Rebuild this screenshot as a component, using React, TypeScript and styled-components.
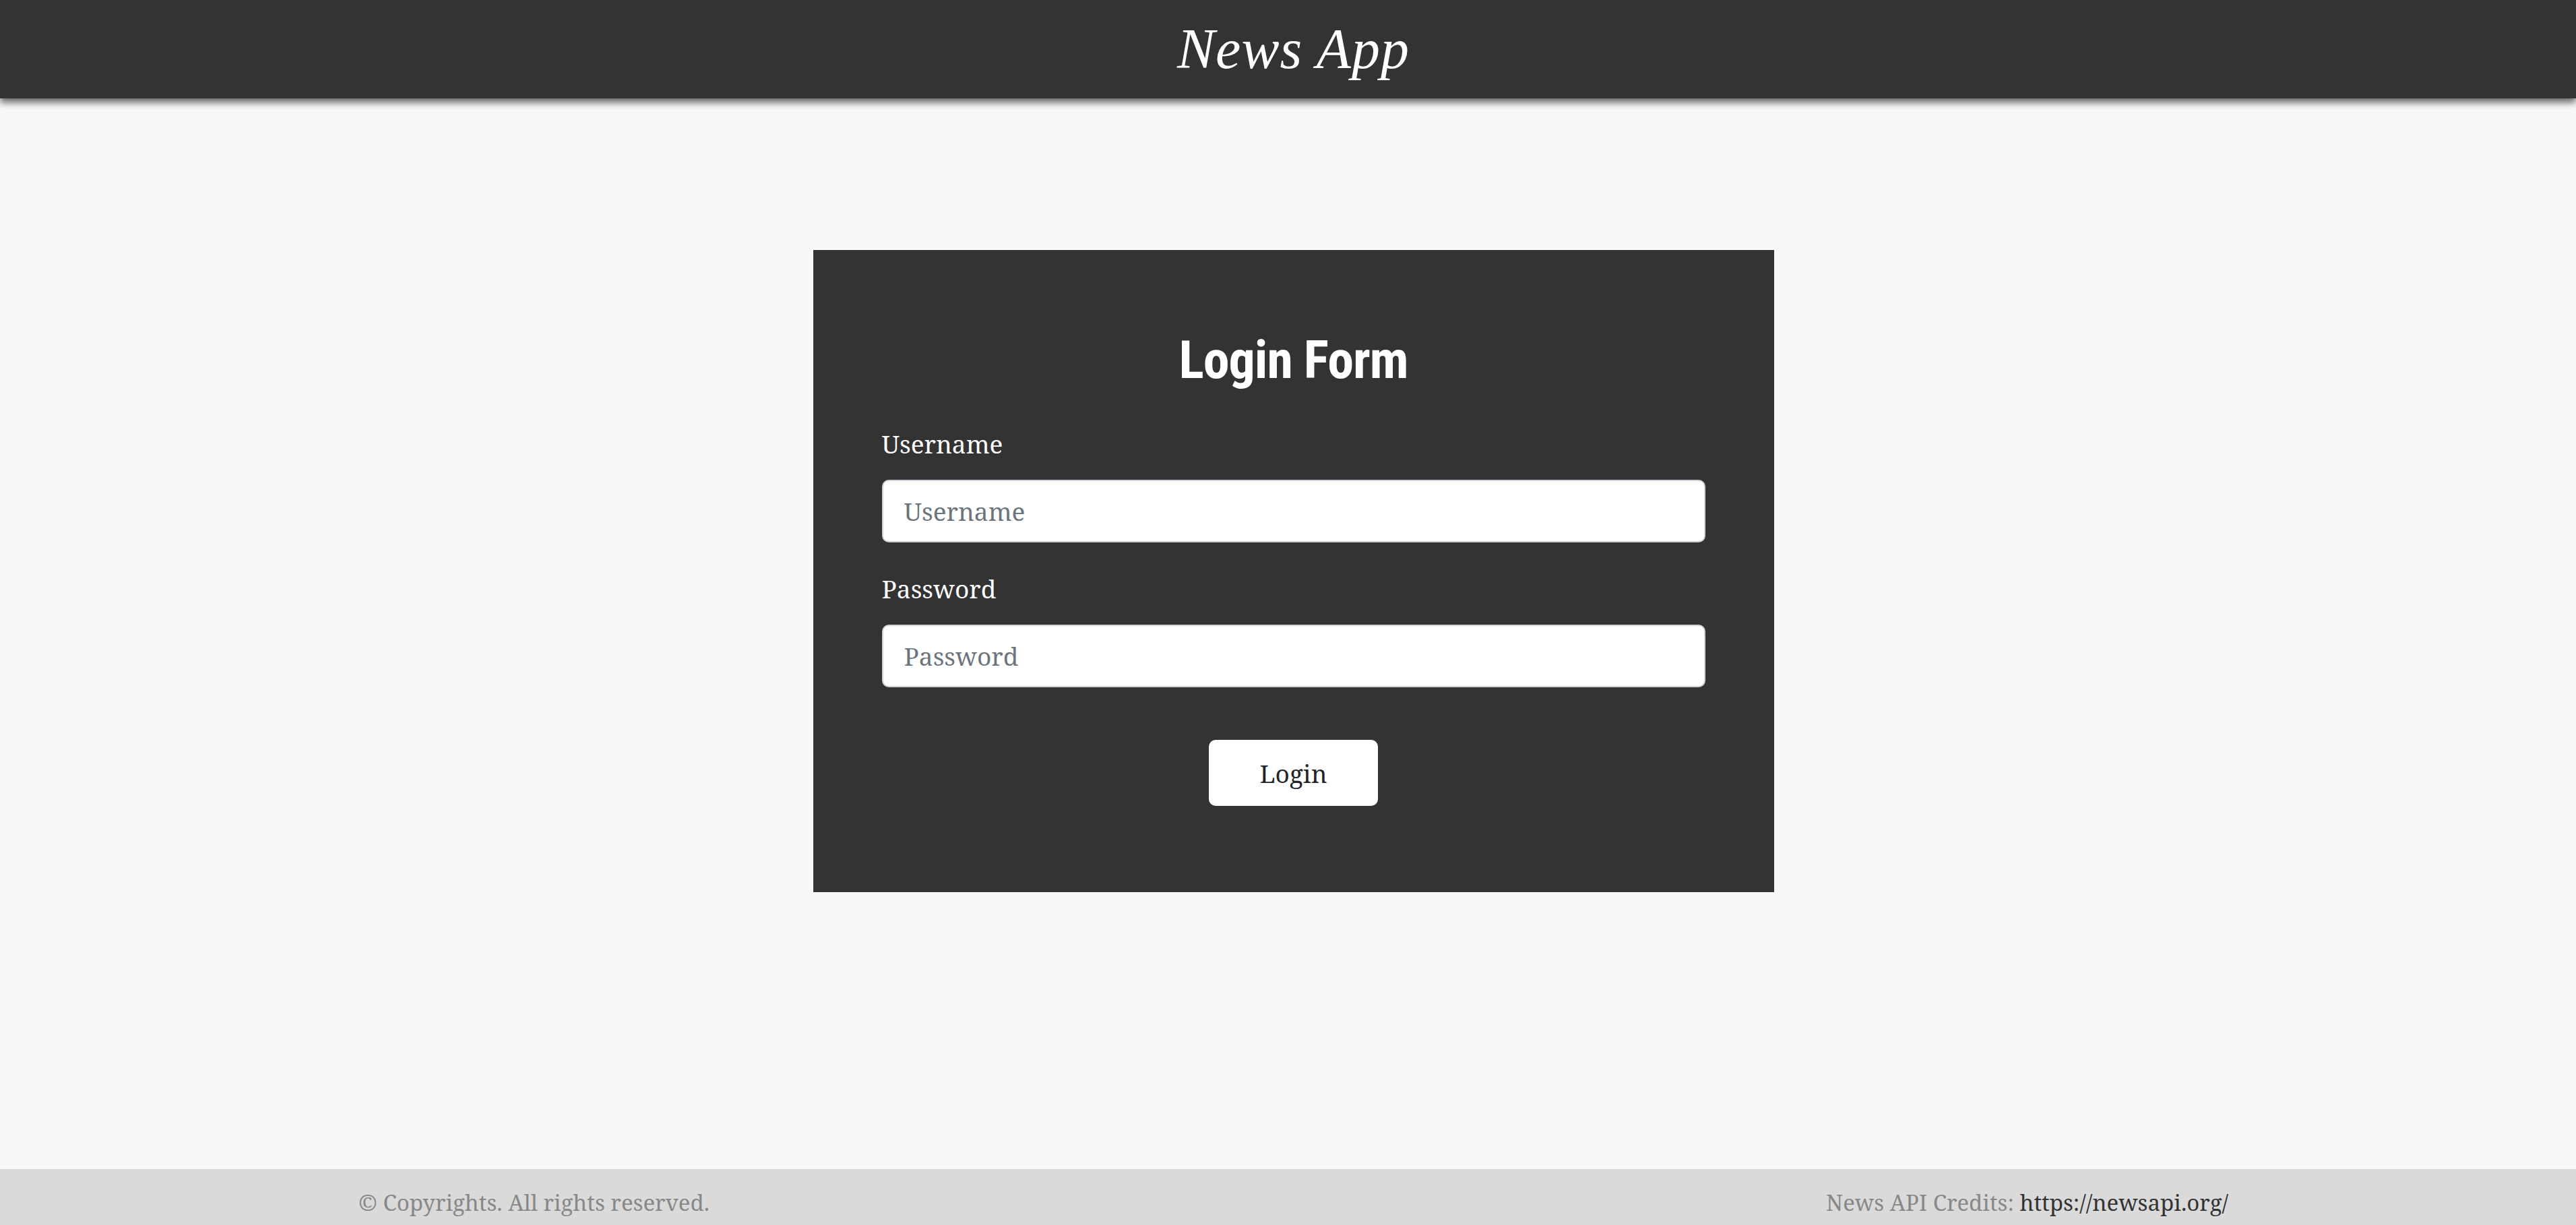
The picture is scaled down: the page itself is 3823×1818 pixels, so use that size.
import React from "react";
import styled, { createGlobalStyle } from "styled-components";

const GlobalStyle = createGlobalStyle`
  html, body {
    margin: 0;
    padding: 0;
    background: #f8f8f8;
  }
  body {
    font-family: "Noto Serif", "DejaVu Serif", serif;
    color: #212529;
  }
  * { box-sizing: border-box; }
`;

const Page = styled.div`
  display: flex;
  flex-direction: column;
  height: 100vh;
  overflow: hidden;
`;

const Header = styled.header`
  position: relative;
  z-index: 2;
  flex: 0 0 146px;
  padding-left: 16px;
  background: #333333;
  box-shadow: 0 6px 10px rgba(0, 0, 0, 0.6);
  display: flex;
  align-items: center;
  justify-content: center;
`;

const Brand = styled.h1`
  margin: 0;
  font-family: "Liberation Serif", "DejaVu Serif", serif;
  font-style: italic;
  font-weight: 400;
  font-size: 84px;
  line-height: 1;
  color: #ffffff;
  letter-spacing: 1px;
`;

const Main = styled.main`
  flex: 0 0 1589px;
  padding-left: 16px;
  display: flex;
  justify-content: center;
  align-items: flex-start;
`;

const Card = styled.section`
  margin-top: 225px;
  width: 1426px;
  height: 953px;
  background: #333333;
  padding: 116px 102px 0;
  display: flex;
  flex-direction: column;
`;

const Title = styled.h2`
  margin: 0 0 47px;
  text-align: center;
  font-family: "Liberation Sans Narrow", "Roboto Condensed", "Liberation Sans", sans-serif;
  font-weight: 700;
  font-size: 78px;
  line-height: 96px;
  letter-spacing: -1px;
  color: #ffffff;
`;

const Field = styled.div<{ $gap: number }>`
  display: flex;
  flex-direction: column;
  margin-bottom: ${(p) => p.$gap}px;
`;

const Label = styled.label`
  height: 57px;
  line-height: 57px;
  font-size: 37px;
  color: #ffffff;
  margin-bottom: 25px;
`;

const Input = styled.input`
  height: 93px;
  width: 100%;
  padding: 0 31px;
  font-family: "Noto Serif", "DejaVu Serif", serif;
  font-size: 37px;
  color: #495057;
  background: #ffffff;
  border: 2px solid #ced4da;
  border-radius: 10px;
  outline: none;
  &::placeholder {
    color: #6c757d;
  }
`;

const ButtonRow = styled.div`
  display: flex;
  justify-content: center;
`;

const Button = styled.button`
  width: 251px;
  height: 98px;
  background: #ffffff;
  border: none;
  border-radius: 10px;
  font-family: "Noto Serif", "DejaVu Serif", serif;
  font-size: 37px;
  color: #212529;
  cursor: pointer;
`;

const Footer = styled.footer`
  flex: 0 0 83px;
  background: #dadada;
  display: flex;
  justify-content: center;
  padding-top: 30px;
  padding-left: 16px;
`;

const FooterInner = styled.div`
  width: 2775px;
  height: 40px;
  display: flex;
  align-items: center;
  justify-content: space-between;
  font-size: 33px;
  line-height: 40px;
  color: #888888;
`;

const FooterText = styled.span``;

const FooterLink = styled.a`
  color: #333333;
  text-decoration: none;
`;

export default function App() {
  return (
    <>
      <GlobalStyle />
      <Page>
        <Header>
          <Brand>News App</Brand>
        </Header>
        <Main>
          <Card>
            <Title>Login Form</Title>
            <Field $gap={40}>
              <Label htmlFor="username">Username</Label>
              <Input id="username" type="text" placeholder="Username" />
            </Field>
            <Field $gap={78}>
              <Label htmlFor="password">Password</Label>
              <Input id="password" type="password" placeholder="Password" />
            </Field>
            <ButtonRow>
              <Button type="button">Login</Button>
            </ButtonRow>
          </Card>
        </Main>
        <Footer>
          <FooterInner>
            <FooterText>© Copyrights. All rights reserved.</FooterText>
            <FooterText>
              News API Credits: <FooterLink href="#">https://newsapi.org/</FooterLink>
            </FooterText>
          </FooterInner>
        </Footer>
      </Page>
    </>
  );
}
